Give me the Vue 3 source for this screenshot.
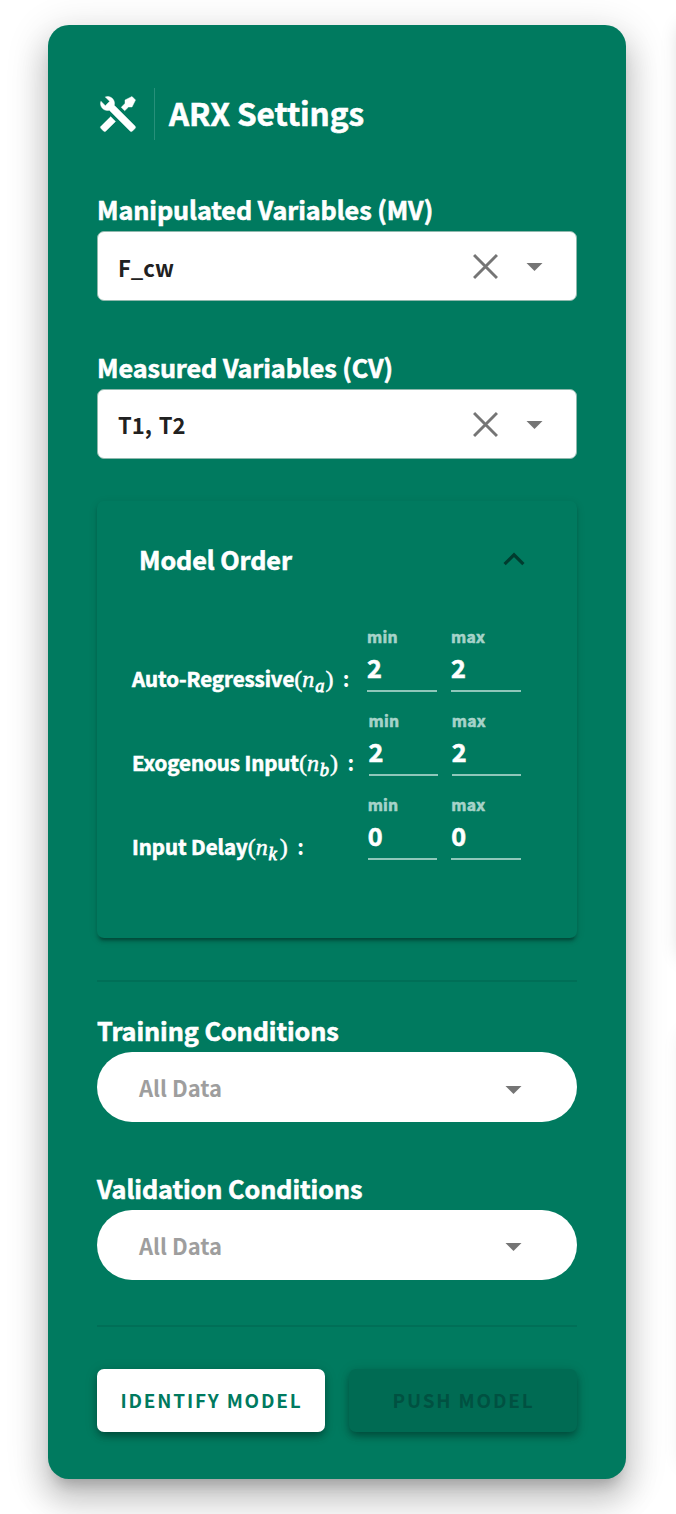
<script setup>
const variables = [
  { label: 'Manipulated Variables (MV)', value: 'F_cw' },
  { label: 'Measured Variables (CV)', value: 'T1, T2' },
]
const orders = [
  { name: 'Auto-Regressive', sub: 'a', value: 2, width: 235 },
  { name: 'Exogenous Input', sub: 'b', value: 2, width: 236.5 },
  { name: 'Input Delay', sub: 'k', value: 0, width: 235.7 },
]
const conditions = ['Training Conditions', 'Validation Conditions']
</script>

<template>
  <div class="page">
    <div class="neighbour top"></div>
    <div class="neighbour bottom"></div>
    <main class="card">
      <header class="title-row">
        <svg class="tools" viewBox="0 0 24 24"><path fill="#fff" stroke="#fff" stroke-width="0.25" d="M21.71 20.29L20.29 21.71A1 1 0 0 1 18.88 21.71L7 9.85A3.81 3.81 0 0 1 6 10A4 4 0 0 1 2.22 4.7L4.76 7.24L5.29 6.71L6.71 5.29L7.24 4.76L4.7 2.22A4 4 0 0 1 10 6A3.81 3.81 0 0 1 9.85 7L21.71 18.88A1 1 0 0 1 21.71 20.29M2.29 18.88A1 1 0 0 0 2.29 20.29L3.71 21.71A1 1 0 0 0 5.12 21.71L10.59 16.25L7.76 13.42M20 2L16 4V6L13.83 8.17L15.83 10.17L18 8H20L22 4Z" /></svg>
        <h1>ARX Settings</h1>
      </header>

      <section v-for="v in variables" :key="v.label" class="field">
        <div class="label">{{ v.label }}</div>
        <div class="select">
          <span class="value">{{ v.value }}</span>
          <svg class="clear" viewBox="0 0 24 24"><path d="M1 1L23 23M23 1L1 23" stroke="#757575" stroke-width="2.8" fill="none" /></svg>
          <svg class="caret" viewBox="0 0 16 8"><path d="M0 0H16L8 8Z" fill="#757575" /></svg>
        </div>
      </section>

      <section class="panel">
        <div class="panel-head">
          <span>Model Order</span>
          <svg class="chevron" viewBox="0 0 22 14"><path d="M1.6 12.2L11 2.8L20.4 12.2" stroke="#003c2f" stroke-width="3.2" fill="none" /></svg>
        </div>
        <div v-for="o in orders" :key="o.sub" class="order">
          <div class="order-name" :style="{ width: o.width + 'px' }">{{ o.name }}<span class="math"><span class="paren">(</span><i>n</i><i class="sub" :class="'sub-' + o.sub">{{ o.sub }}</i><span class="paren">)</span></span><span class="colon">:</span></div>
          <div v-for="k in ['min', 'max']" :key="k" class="num">
            <div class="num-label">{{ k }}</div>
            <div class="num-value">{{ o.value }}</div>
          </div>
        </div>
      </section>

      <hr class="rule first" />

      <section v-for="c in conditions" :key="c" class="field">
        <div class="label">{{ c }}</div>
        <div class="select pill">
          <span class="value">All Data</span>
          <svg class="caret" viewBox="0 0 16 8"><path d="M0 0H16L8 8Z" fill="#757575" /></svg>
        </div>
      </section>

      <hr class="rule second" />

      <div class="actions">
        <button class="btn primary">IDENTIFY MODEL</button>
        <button class="btn disabled" disabled>PUSH MODEL</button>
      </div>
    </main>
  </div>
</template>

<style>
body {
  margin: 0;
  background: #fff;
}
</style>

<style scoped>
.page {
  position: relative;
  box-sizing: border-box;
  width: 676px;
  height: 1514px;
  padding: 25px 50px 35px 48px;
  overflow: hidden;
  background: #fff;
  font-family: "Noto Sans CJK SC", "Noto Sans", sans-serif;
  font-weight: 700;
  color: #fff;
}
.neighbour {
  position: absolute;
  left: 684px;
  width: 300px;
  box-shadow: 0 4px 20px 2px rgba(0, 0, 0, 0.2);
}
.neighbour.top {
  top: 25px;
  height: 925px;
}
.neighbour.bottom {
  top: 1030px;
  height: 430px;
  box-shadow: 0 4px 20px 0 rgba(0, 0, 0, 0.12);
}
.card {
  position: relative;
  box-sizing: border-box;
  height: 1454px;
  padding: 63px 49px 47px;
  border-radius: 21px;
  background: #007a5f;
  box-shadow: 0 12px 14px -7px rgba(0, 0, 0, 0.2), 0 21px 30px 3.5px rgba(0, 0, 0, 0.14), 0 9px 38px 7px rgba(0, 0, 0, 0.12);
}
.title-row {
  display: flex;
  align-items: center;
  height: 52px;
  margin-bottom: 47px;
}
.tools {
  width: 42px;
  height: 42px;
}
h1 {
  margin: 0 0 0 15px;
  padding-left: 14px;
  border-left: 1px solid #27907a;
  height: 52px;
  line-height: 49px;
  font-size: 31.5px;
  font-weight: 700;
  letter-spacing: -0.08px;
  white-space: nowrap;
}
h1,
.label,
.panel-head span,
.order-name,
.num-label,
.num-value {
  -webkit-text-stroke: 0.6px currentColor;
}
.field {
  margin-bottom: 44px;
}
.label {
  height: 44px;
  line-height: 44px;
  font-size: 25.2px;
  letter-spacing: -0.06px;
  white-space: nowrap;
}
.select {
  display: flex;
  align-items: center;
  box-sizing: border-box;
  height: 70px;
  padding: 0 33px 0 20px;
  border: 1px solid #8fb8ad;
  border-radius: 7px;
  background: #fff;
}
.value {
  flex: 1;
  line-height: 68px;
  font-size: 22px;
  word-spacing: 2px;
  color: #212121;
}
.field:first-of-type .value {
  padding-top: 1px;
}
.clear {
  width: 25px;
  height: 25px;
  margin-right: 28px;
}
.caret {
  width: 17px;
  height: 8px;
  margin-top: 2px;
}
.pill {
  border: 0;
  border-radius: 35px;
  padding: 0 55px 0 42px;
}
.pill .value {
  word-spacing: 0;
  color: #9e9e9e;
}
.pill .caret {
  margin-top: 5px;
}
.field:nth-last-of-type(1) .caret {
  margin-top: 4px;
}
.panel {
  box-sizing: border-box;
  height: 437px;
  margin-top: -2px;
  padding: 0 56px 0 35px;
  border-radius: 7px;
  box-shadow: 0 5px 2px -3.5px rgba(0, 0, 0, 0.2), 0 3.5px 3.5px 0 rgba(0, 0, 0, 0.14), 0 2px 9px 0 rgba(0, 0, 0, 0.12);
}
.panel-head {
  display: flex;
  align-items: center;
  justify-content: space-between;
  height: 116px;
  margin: 0 -4px 0 7px;
  font-size: 25.2px;
  letter-spacing: -0.08px;
}
.chevron {
  width: 22px;
  height: 14px;
}
.order {
  display: flex;
  height: 84px;
}
.order-name {
  flex: none;
  height: 84px;
  padding-top: 46px;
  box-sizing: border-box;
  line-height: 30px;
  font-size: 20.5px;
  letter-spacing: -0.06px;
  white-space: nowrap;
}
.math {
  font-family: "Liberation Serif", serif;
  font-size: 24px;
  font-weight: 400;
  line-height: 0;
  -webkit-text-stroke: 0.5px currentColor;
}
.sub {
  margin: 0 1px;
  font-size: 18.5px;
  position: relative;
  top: 5px;
  -webkit-text-stroke: 0.8px currentColor;
}
.sub-k {
  margin: 0 3px 0 1px;
}
.colon {
  margin-left: 9.5px;
  -webkit-text-stroke: 0;
}
.num {
  flex: 1;
  box-sizing: border-box;
  height: 75px;
  border-bottom: 2px solid #8fc7ba;
}
.num + .num {
  margin-left: 14px;
}
.num-label {
  height: 38px;
  line-height: 40px;
  font-size: 15.8px;
  letter-spacing: 0.2px;
  color: #a6d3c9;
}
.num-value {
  height: 30px;
  line-height: 24px;
  font-size: 25.2px;
}
.rule {
  height: 2px;
  margin: 0;
  border: 0;
  background: #006f57;
}
.rule.first {
  margin: 42px 0 26px;
}
.rule.second {
  margin: 45px 0 42px;
}
.actions {
  display: flex;
  gap: 24px;
}
.btn {
  flex: none;
  width: 228px;
  height: 63px;
  padding: 0 0 3px 1px;
  border: 0;
  border-radius: 7px;
  font-family: inherit;
  font-size: 18.9px;
  font-weight: 700;
  letter-spacing: 1.84px;
  white-space: nowrap;
  box-shadow: 0 5px 7px -2px rgba(0, 0, 0, 0.2), 0 4px 9px 0 rgba(0, 0, 0, 0.16), 0 2px 14px 0 rgba(0, 0, 0, 0.12);
}
.primary {
  background: #fff;
  color: #007a5f;
}
.disabled {
  background: #006b53;
  color: #005141;
}
</style>
